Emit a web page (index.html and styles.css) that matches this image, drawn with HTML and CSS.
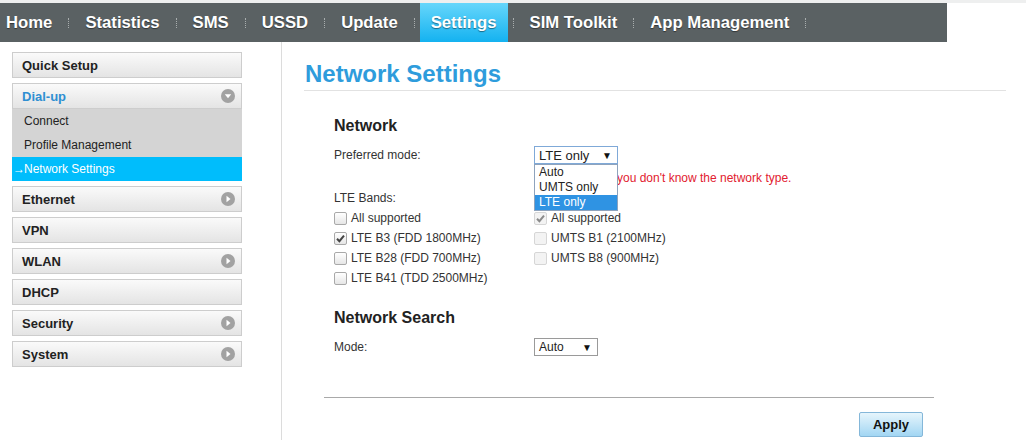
FILE: index.html
```html
<!DOCTYPE html>
<html lang="en">
<head>
    <meta charset="UTF-8">
    <meta name="viewport" content="width=device-width, initial-scale=1.0">
    <title>Network Settings</title>
    <link rel="stylesheet" href="styles.css">
</head>
<body>
    <div class="topline"></div>
    <!-- Top navigation -->
    <ul class="nav">
        <li class="nav-item first">Home</li><li class="sep"></li>
        <li class="nav-item">Statistics</li><li class="sep"></li>
        <li class="nav-item">SMS</li><li class="sep"></li>
        <li class="nav-item">USSD</li><li class="sep"></li>
        <li class="nav-item">Update</li><li class="sep"></li>
        <li class="nav-item active">Settings</li><li class="sep"></li>
        <li class="nav-item">SIM Toolkit</li><li class="sep"></li>
        <li class="nav-item">App Management</li><li class="sep"></li>
    </ul>

    <div class="main">
        <!-- Left menu -->
        <div class="side">
            <ul class="menu">
                <li class="menu-item">Quick Setup</li>
                <li class="menu-group">
                    <div class="menu-item open">Dial-up
                        <svg class="arrow" width="14" height="14" viewBox="0 0 14 14"><circle cx="7" cy="7" r="7" fill="#a2a2a2"/><polygon points="3.8,5.3 10.2,5.3 7,9.3" fill="#fff"/></svg>
                    </div>
                    <ul class="submenu">
                        <li>Connect</li>
                        <li>Profile Management</li>
                        <li class="current"><span class="cur-arrow">&rarr;</span>Network Settings</li>
                    </ul>
                </li>
                <li class="menu-item">Ethernet
                    <svg class="arrow" width="14" height="14" viewBox="0 0 14 14"><circle cx="7" cy="7" r="7" fill="#a2a2a2"/><polygon points="5.5,3.8 9.5,7 5.5,10.2" fill="#fff"/></svg>
                </li>
                <li class="menu-item">VPN</li>
                <li class="menu-item">WLAN
                    <svg class="arrow" width="14" height="14" viewBox="0 0 14 14"><circle cx="7" cy="7" r="7" fill="#a2a2a2"/><polygon points="5.5,3.8 9.5,7 5.5,10.2" fill="#fff"/></svg>
                </li>
                <li class="menu-item">DHCP</li>
                <li class="menu-item">Security
                    <svg class="arrow" width="14" height="14" viewBox="0 0 14 14"><circle cx="7" cy="7" r="7" fill="#a2a2a2"/><polygon points="5.5,3.8 9.5,7 5.5,10.2" fill="#fff"/></svg>
                </li>
                <li class="menu-item">System
                    <svg class="arrow" width="14" height="14" viewBox="0 0 14 14"><circle cx="7" cy="7" r="7" fill="#a2a2a2"/><polygon points="5.5,3.8 9.5,7 5.5,10.2" fill="#fff"/></svg>
                </li>
            </ul>
        </div>

        <!-- Page content -->
        <div class="content">
            <h1 class="page-title">Network Settings</h1>

            <div class="form">
                <h3 class="section-title">Network</h3>
                <div class="row">
                    <span class="label">Preferred mode:</span>
                    <div class="select-wrap">
                        <div class="select focus"><span>LTE only</span><span class="caret">&#9660;</span></div>
                        <!-- open list, drawn over the hint and the UMTS header -->
                        <ul class="options">
                            <li>Auto</li>
                            <li>UMTS only</li>
                            <li class="picked">LTE only</li>
                        </ul>
                    </div>
                </div>
                <div class="row hint-row">
                    <span class="label"></span>
                    <span class="hint">you don't know the network type.</span>
                </div>

                <div class="bands">
                    <div class="band-head">LTE Bands:</div>
                    <div class="band-head"></div>

                    <label class="check"><span class="box"></span>All supported</label>
                    <label class="check"><span class="box disabled"><svg width="13" height="13" viewBox="0 0 13 13"><path d="M3 6.8 L5.4 9.2 L10 3.6" fill="none" stroke="#8a8a8a" stroke-width="2"/></svg></span>All supported</label>

                    <label class="check"><span class="box"><svg width="13" height="13" viewBox="0 0 13 13"><path d="M3 6.8 L5.4 9.2 L10 3.6" fill="none" stroke="#444" stroke-width="2"/></svg></span>LTE B3 (FDD 1800MHz)</label>
                    <label class="check"><span class="box disabled"></span>UMTS B1 (2100MHz)</label>

                    <label class="check"><span class="box"></span>LTE B28 (FDD 700MHz)</label>
                    <label class="check"><span class="box disabled"></span>UMTS B8 (900MHz)</label>

                    <label class="check"><span class="box"></span>LTE B41 (TDD 2500MHz)</label>
                </div>

                <h3 class="section-title search-title">Network Search</h3>
                <div class="row mode-row">
                    <span class="label">Mode:</span>
                    <div class="select small"><span>Auto</span><span class="caret">&#9660;</span></div>
                </div>

                <div class="divider"></div>
                <div class="actions">
                    <button class="apply" type="button">Apply</button>
                </div>
            </div>
        </div>
    </div>
</body>
</html>
```

FILE: styles.css
```css
body {
    margin: 0;
    font-family: "Liberation Sans", Arial, sans-serif;
    color: #333;
    background: #fff;
}
ul {
    list-style: none;
    margin: 0;
    padding: 0;
}

/* top bar */
.topline {
    height: 3px;
    background: #eeefef;
}
.nav {
    display: flex;
    width: 947px;
    height: 39px;
    background: #5a6163;
}
.nav-item {
    padding: 0 11px;
    line-height: 39px;
    font-size: 16.7px;
    font-weight: bold;
    color: #fff;
    text-shadow: 0 1px 1px rgba(0, 0, 0, 0.45);
}
.nav-item.first {
    padding-left: 6px;
}
.nav-item.active {
    background: linear-gradient(#66d6fb, #14b2f0);
}
.sep {
    width: 11px;
    display: flex;
    align-items: center;
    justify-content: center;
}
.sep::before {
    content: "";
    height: 10px;
    border-left: 1px dotted #a9aeae;
}

.main {
    display: flex;
    min-height: 398px;
}

/* left menu */
.side {
    width: 281px;
    border-right: 1px solid #dcdcdc;
    padding-top: 10px;
}
.menu {
    width: 230px;
    margin-left: 12px;
}
.menu-item {
    position: relative;
    height: 24px;
    line-height: 25px;
    padding-left: 9px;
    border: 1px solid #cdcdcd;
    background: linear-gradient(#fafafa, #e4e4e4);
    font-size: 13px;
    font-weight: bold;
    color: #222;
    margin-bottom: 5px;
}
.menu-item .arrow {
    position: absolute;
    right: 6px;
    top: 5px;
}
.menu-group {
    margin-bottom: 5px;
}
.menu-group .menu-item {
    margin-bottom: 0;
}
.menu-item.open {
    color: #2f8fd2;
}
.submenu {
    background: #d4d4d4;
}
.submenu li {
    height: 24px;
    line-height: 25px;
    padding-left: 12px;
    font-size: 12px;
    color: #222;
}
.submenu li.current {
    padding-left: 1px;
    background: #00bdfc;
    color: #fff;
}
.cur-arrow {
    display: inline-block;
    width: 11px;
}

/* content */
.content {
    flex: 1;
    padding: 0 20px 0 22px;
}
.page-title {
    margin: 0;
    padding: 17px 0 1px 1px;
    line-height: 30px;
    font-size: 24px;
    color: #2e9cdc;
    border-bottom: 1px solid #e2e2e2;
}
.form {
    width: 590px;
    padding: 0 10px;
    margin-left: 20px;
    font-size: 12px;
}
.section-title {
    margin: 25px 0 0;
    line-height: 20px;
    font-size: 16px;
    color: #222;
}
.row {
    display: flex;
    align-items: center;
    height: 20px;
    margin-top: 9px;
}
.label {
    width: 200px;
    flex-shrink: 0;
}
.hint-row {
    margin-top: 3px;
}
.hint {
    margin-left: 83px;
    color: #e2202f;
}

.select-wrap {
    position: relative;
}
.select {
    box-sizing: border-box;
    display: flex;
    justify-content: space-between;
    align-items: center;
    width: 84px;
    height: 18px;
    padding: 0 5px 0 4px;
    border: 1px solid #9a9a9a;
    background: #fff;
    font-size: 13px;
    color: #222;
}
.select.focus {
    border-color: #7fa9d8;
}
.select.small {
    width: 64px;
    font-size: 12px;
}
.caret {
    font-size: 10px;
    color: #111;
}
.options {
    position: absolute;
    left: 0;
    top: 18px;
    width: 84px;
    box-sizing: border-box;
    border: 1px solid #8ea3bd;
    background: #fff;
    z-index: 2;
}
.options li {
    height: 15px;
    line-height: 15px;
    padding-left: 4px;
    font-size: 12px;
    color: #222;
}
.options li.picked {
    background: #2f93e3;
    color: #fff;
}

.bands {
    display: grid;
    grid-template-columns: 200px auto;
    grid-auto-rows: 20px;
    grid-template-rows: 19px;
    margin-top: 1px;
}
.band-head {
    line-height: 19px;
}
.check {
    display: flex;
    align-items: center;
}
.box {
    box-sizing: border-box;
    width: 13px;
    height: 13px;
    margin-right: 4px;
    border: 1px solid #a9a9a9;
    border-radius: 2px;
    background: linear-gradient(#fff, #e6e6e6);
    display: flex;
    align-items: center;
    justify-content: center;
}
.box svg {
    margin: -1px;
}
.box.disabled {
    border-color: #d6d6d6;
    background: #f3f3f3;
}

.search-title {
    margin-top: 20px;
}
.mode-row {
    margin-top: 9px;
}
.divider {
    margin: 40px -10px 0;
    border-top: 1px solid #a9a9a9;
}
.actions {
    display: flex;
    justify-content: flex-end;
    padding-top: 14px;
}
.apply {
    width: 64px;
    height: 25px;
    margin-right: 1px;
    border: 1px solid #84b7d9;
    border-radius: 2px;
    background: linear-gradient(#e6f5fc, #a2d6f3);
    font-family: "Liberation Sans", Arial, sans-serif;
    font-size: 13px;
    font-weight: bold;
    color: #111;
    cursor: pointer;
}
```
